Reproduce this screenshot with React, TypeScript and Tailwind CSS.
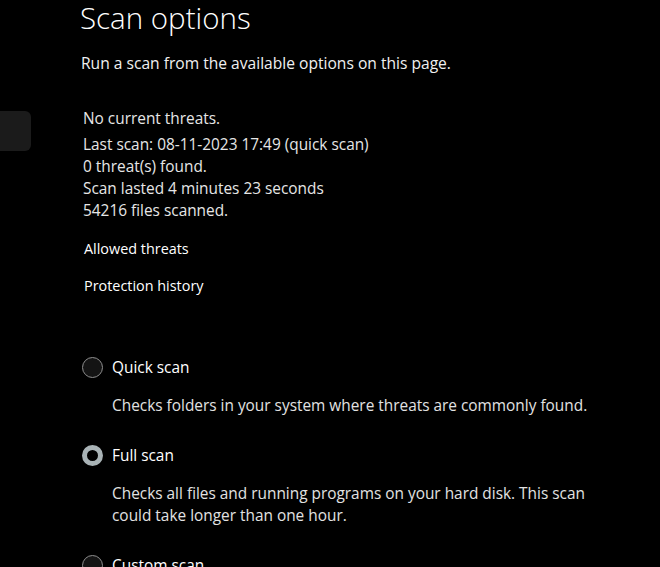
const font = { fontFamily: '"Open Sans", "Noto Sans", sans-serif' };

function Radio({ checked }: { checked?: boolean }) {
  return checked ? (
    <span className="block h-[21px] w-[21px] shrink-0 rounded-full border-[5px] border-[#a9b3b6] bg-black" />
  ) : (
    <span className="block h-[21px] w-[21px] shrink-0 rounded-full border border-[#8f8f8f] bg-[#141414]" />
  );
}

function Option({ label, desc, checked }: { label: string; desc?: string; checked?: boolean }) {
  return (
    <div>
      <div className="flex items-center gap-[9px] pl-[82px]">
        <Radio checked={checked} />
        <span className="text-[15.4px] text-white">{label}</span>
      </div>
      {desc && (
        <p className="ml-[112px] mt-[16px] w-[492px] text-[15.4px] leading-[22px] text-[#e2e2e2]">{desc}</p>
      )}
    </div>
  );
}

export default function App() {
  return (
    <div className="relative h-[567px] w-[660px] overflow-hidden bg-black text-white" style={font}>
      <div className="absolute left-0 top-[111px] h-[40px] w-[31px] rounded-r-md bg-[#1b1b1b]" />
      <h1 className="pl-[80px] text-[29.5px] font-light leading-[36px]">Scan options</h1>
      <p className="mt-[16px] pl-[81px] text-[15.6px] leading-[22px] text-[#f0f0f0]">
        Run a scan from the available options on this page.
      </p>
      <div className="mt-[34px] pl-[83px] text-[15.4px] leading-[22px] text-[#e6e6e6]">
        <p>No current threats.</p>
        <div className="mt-[4px]">
          <p>Last scan: 08-11-2023 17:49 (quick scan)</p>
          <p>0 threat(s) found.</p>
          <p>Scan lasted 4 minutes 23 seconds</p>
          <p>54216 files scanned.</p>
        </div>
      </div>
      <div className="mt-[16px] flex flex-col gap-[15px] pl-[84px] text-[14.4px] leading-[22px] text-white">
        <span>Allowed threats</span>
        <span>Protection history</span>
      </div>
      <div className="mt-[59px] flex flex-col gap-[27px]">
        <Option label="Quick scan" desc="Checks folders in your system where threats are commonly found." />
        <Option
          checked
          label="Full scan"
          desc="Checks all files and running programs on your hard disk. This scan could take longer than one hour."
        />
        <Option label="Custom scan" />
      </div>
    </div>
  );
}
